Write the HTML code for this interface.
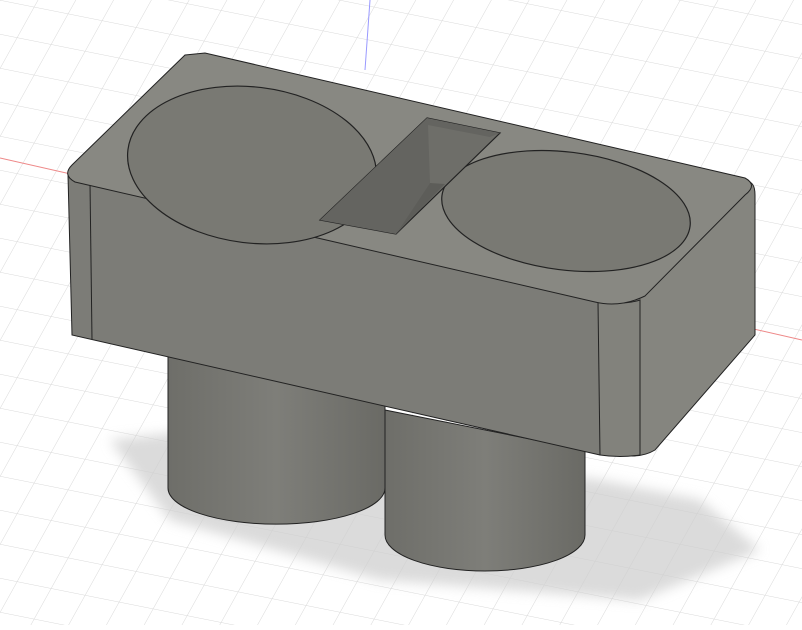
<!DOCTYPE html>
<html><head><style>html,body{margin:0;padding:0;background:#fff;overflow:hidden}</style></head>
<body>
<svg width="802" height="625" viewBox="0 0 802 625" xmlns="http://www.w3.org/2000/svg">
<defs>
<pattern id="g" width="34" height="34" patternUnits="userSpaceOnUse" patternTransform="matrix(1 0.2 -0.5 0.9 0 0)">
<path d="M0 0H34M0 0V34" stroke="#d8d8d8" stroke-width="1" fill="none"/>
</pattern>
<linearGradient id="cyl" x1="0" x2="1">
<stop offset="0" stop-color="#6e6e69"/><stop offset="0.5" stop-color="#7e7e79"/><stop offset="1" stop-color="#6a6a65"/>
</linearGradient>
<filter id="bl"><feGaussianBlur stdDeviation="6"/></filter>
</defs>
<rect width="802" height="625" fill="#fff"/>
<rect width="802" height="625" fill="url(#g)"/>
<line x1="0" y1="158" x2="802" y2="340" stroke="#e88" stroke-width="1"/>
<line x1="370" y1="0" x2="365" y2="70" stroke="#99f" stroke-width="1"/>
<!-- shadow -->
<path d="M110 440 L200 430 L600 480 L700 500 L760 550 L640 600 L380 580 L170 520 Z" fill="#cfcfcf" opacity="0.75" filter="url(#bl)"/>
<!-- cylinders -->
<path d="M385 410 L385 535 A100 36 0 0 0 585 535 L585 450 Z" fill="url(#cyl)" stroke="#222" stroke-width="1"/>
<path d="M168 355 L168 488 A108 36 0 0 0 385 488 L385 380 Z" fill="url(#cyl)" stroke="#222" stroke-width="1"/>
<!-- front face -->
<path d="M68 175 L600 302 L640 305 L640 455 L600 455 L72 335 Z" fill="#7c7c77" stroke="#222" stroke-width="1"/>
<!-- right face -->
<path d="M625 300 L745 182 Q755 180 755 195 L755 335 L655 450 Q645 456 632 456 L630 300 Z" fill="#85857f" stroke="#222" stroke-width="1"/>
<path d="M598 302 Q625 305 640 300 L640 455 Q620 458 600 455 Z" fill="#82827c" stroke="#222" stroke-width="1"/>
<line x1="90" y1="183" x2="92" y2="340" stroke="#222"/>
<!-- top face -->
<path d="M185 55 L205 53 L745 178 Q758 185 745 195 L645 296 Q620 308 595 302 L75 182 Q62 175 72 165 Z" fill="#888882" stroke="#222" stroke-width="1"/>
<!-- holes -->
<ellipse cx="252" cy="165" rx="125" ry="78" transform="rotate(7 252 165)" fill="#797973" stroke="#222" stroke-width="1.2"/>
<ellipse cx="566" cy="211" rx="125" ry="59" transform="rotate(7 566 211)" fill="#797973" stroke="#222" stroke-width="1.2"/>
<!-- slot -->
<path d="M427 118 L500 133 L396 234 L320 220 Z" fill="#6e6e69" stroke="#222" stroke-width="1.2"/>
<path d="M427 118 L500 133 L490 137 L428 125 L430 183 L396 234 L320 220 Z" fill="#646460"/>
<path d="M430 183 L445 184 L396 234 Z" fill="#5d5d59"/>
</svg>
</body></html>
